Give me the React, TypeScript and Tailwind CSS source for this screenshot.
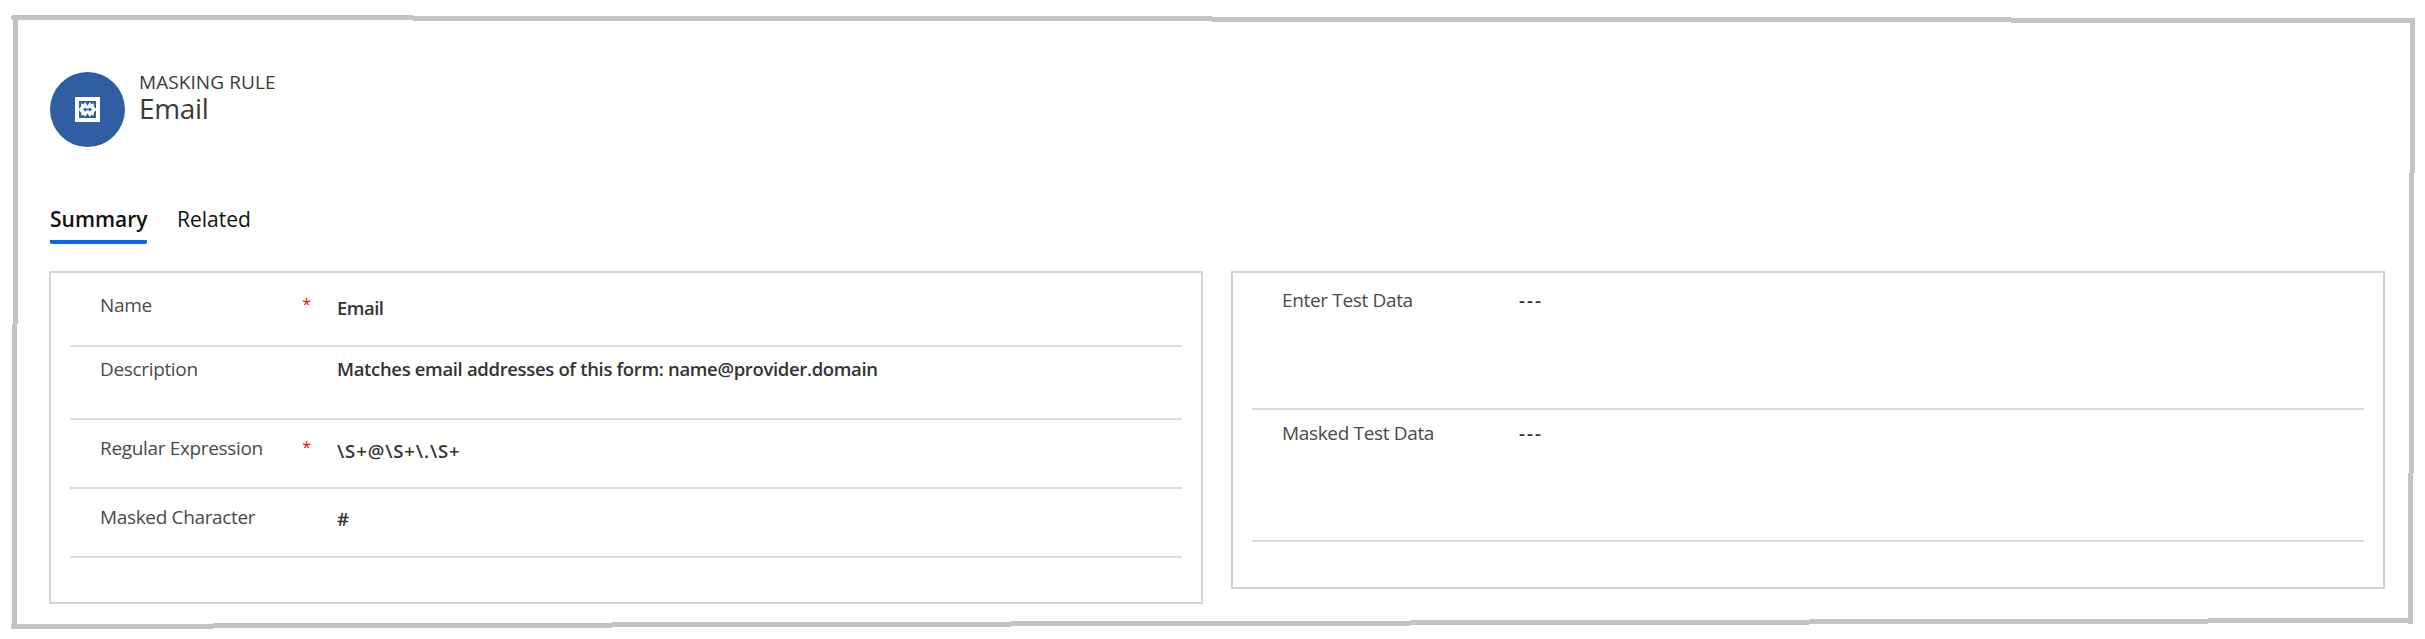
import React from "react";

type RowProps = { label: string; value: string; required?: boolean; row: string; labelPad: string; valuePad: string; valueClass: string };

const frame: [number, number, number, number][] = [
  [12, 15, 401, 5], [11, 16, 2, 3], [413, 16, 799, 5], [1212, 17, 799, 5], [2011, 18, 401, 5],
  [13, 17, 5, 307], [12, 324, 5, 304],
  [2410, 18, 5, 155], [2409, 173, 5, 300], [2408, 473, 5, 151],
  [11, 624, 202, 5], [213, 623, 399, 5], [612, 622, 399, 5], [1011, 621, 399, 5],
  [1410, 620, 399, 5], [1809, 619, 399, 5], [2208, 618, 202, 5],
];

function Row({ label, value, required, row, labelPad, valuePad, valueClass }: RowProps) {
  return (
    <div className={`flex border-b-2 border-[#dcdcdc] pl-[30px] ${row}`}>
      <div className={`flex w-[237px] justify-between pr-[26px] ${labelPad}`}>
        <span className="text-[19px] leading-[26px] tracking-[-0.34px] text-[#4a4a4a]">{label}</span>
        {required && <span className="text-[16px] leading-[24px] text-[#f00]">*</span>}
      </div>
      <div className={`text-[18.5px] font-semibold leading-[26px] text-[#333] ${valuePad} ${valueClass}`}>{value}</div>
    </div>
  );
}

export default function App() {
  return (
    <div className="relative h-[639px] w-[2425px] overflow-hidden bg-white pl-[49px] pt-[72px] font-['Open_Sans','Noto_Sans',sans-serif]">
      <svg className="pointer-events-none absolute inset-0" width="2425" height="639" shapeRendering="crispEdges" fill="#c3c3c3">
        {frame.map(([x, y, w, h]) => (
          <rect key={`${x}-${y}`} x={x} y={y} width={w} height={h} />
        ))}
      </svg>
      <header className="flex h-[75px] items-start pl-px">
        <div className="flex size-[75px] items-center justify-center rounded-full bg-[#2f5ea2]">
          <svg width="25" height="25" viewBox="0 0 25 25">
            <rect width="25" height="25" rx="0.5" fill="#fff" />
            <rect x="4" y="4" width="17" height="17" fill="#2f5ea2" />
            <path
              d="M3.500 12.500L6.300 9.200L6 6.500L8.500 7L10.300 5.300L12.500 8.800L14.700 5.300L16.500 7L19 6.500L18.700 9.200L21.500 12.500L18.700 15.800L19 18.500L16.500 18L14.700 19.700L12.500 16.200L10.300 19.700L8.500 18L6 18.500L6.300 15.800Z"
              fill="#fff"
            />
            <path d="M8 12.500L10.500 10.300L11 11.700H14L14.500 10.300L17 12.500L14.500 14.700L14 13.300H11L10.500 14.700Z" fill="#2f5ea2" />
          </svg>
        </div>
        <div className="flex flex-col pl-[14px]">
          <span className="-mt-[2px] text-[19px] leading-[25px] tracking-[0.08px] text-[#3a3a3a]">MASKING RULE</span>
          <span className="-mt-[6px] text-[28px] leading-[38px] tracking-[-0.35px] text-[#3a3a3a]">Email</span>
        </div>
      </header>
      <nav className="mt-[56px] flex h-[41px] gap-[30px] pl-px text-[21px] leading-[32px] text-[#111]">
        <div className="w-[97px] rounded-[2px] border-b-4 border-[#0a62f8] font-semibold">Summary</div>
        <div>Related</div>
      </nav>
      <main className="mt-[27px] flex items-start gap-[28px]">
        <section className="h-[333px] w-[1154px] border-2 border-[#d4d4d4] px-[19px]">
          <Row label="Name" value="Email" required row="h-[74px]" labelPad="pt-[19px]" valuePad="pt-[22px]" valueClass="tracking-[-0.5px]" />
          <Row label="Description" value="Matches email addresses of this form: name@provider.domain" row="h-[73px]" labelPad="pt-[9px]" valuePad="pt-[9px]" valueClass="tracking-[-0.34px]" />
          <Row label="Regular Expression" value="\S+@\S+\.\S+" required row="h-[69px]" labelPad="pt-[15px]" valuePad="pt-[18px]" valueClass="tracking-[0.9px]" />
          <Row label="Masked Character" value="#" row="h-[69px]" labelPad="pt-[15px]" valuePad="pt-[17px]" valueClass="tracking-normal" />
        </section>
        <section className="h-[318px] w-[1154px] border-2 border-[#d4d4d4] px-[19px]">
          <Row label="Enter Test Data" value="---" row="h-[137px]" labelPad="pt-[14px]" valuePad="pt-[14px]" valueClass="tracking-[2px]" />
          <Row label="Masked Test Data" value="---" row="h-[132px]" labelPad="pt-[10px]" valuePad="pt-[10px]" valueClass="tracking-[2px]" />
        </section>
      </main>
    </div>
  );
}
